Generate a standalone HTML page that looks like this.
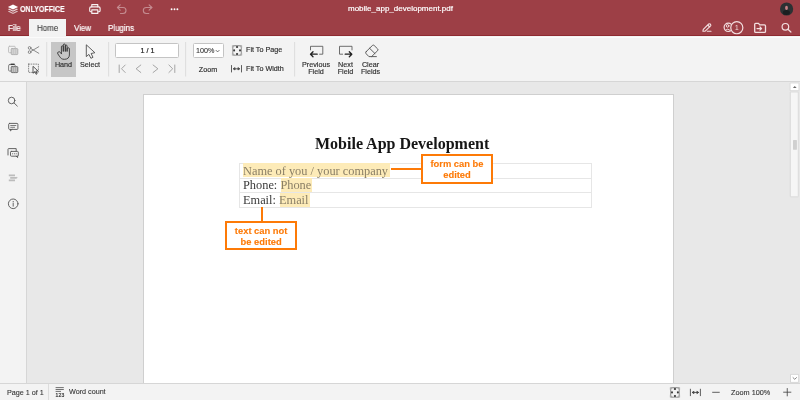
<!DOCTYPE html>
<html><head><meta charset="utf-8">
<style>
*{box-sizing:border-box;margin:0;padding:0}
html,body{width:800px;height:400px;overflow:hidden;background:#e8e8e8;font-family:"Liberation Sans",sans-serif;color:#444}
.a{position:absolute;white-space:nowrap}
#header{position:absolute;left:0;top:0;width:800px;height:36px;background:#9d3f46}
.tab{position:absolute;top:20.1px;height:17px;font-size:8.4px;color:#fff;line-height:17px;-webkit-text-stroke:0.2px #fff;transform-origin:0 0;transform:scaleX(0.95)}
#toolbar{position:absolute;left:0;top:36px;width:800px;height:46px;background:#f3f3f3;border-bottom:1px solid #d6d6d6}
#leftpanel{position:absolute;left:0;top:82px;width:27px;height:301px;background:#f3f3f3;border-right:1px solid #d6d6d6}
#page{position:absolute;left:143px;top:94px;width:531px;height:300px;background:#fff;border:1px solid #cfcfcf}
#status{position:absolute;left:0;top:383px;width:800px;height:17px;background:#f3f3f3;border-top:1px solid #d6d6d6}
.lbl{position:absolute;font-size:7.2px;color:#2e2e2e;white-space:nowrap;line-height:7.25px;text-align:center;-webkit-text-stroke:0.15px #2a2a2a}
.st{position:absolute;white-space:nowrap;font-size:7.2px;line-height:9px;color:#333;-webkit-text-stroke:0.1px #333}
.serif{font-family:"Liberation Serif",serif}
.callout{position:absolute;border:2px solid #fd7a07;background:#fff;color:#fd7a07;font-weight:bold;font-size:9.4px;line-height:10.9px;text-align:center;-webkit-text-stroke:0.1px #fd7a07}
#ov{position:absolute;left:0;top:0;width:800px;height:400px}
.a,.tab,.lbl,.st,.callout{will-change:transform}
</style></head><body>
<div id="header">
  <div class="a" style="left:0;top:35px;width:800px;height:1px;background:#8e2a31"></div>
  <div class="a" style="left:20.3px;top:4.3px;font-size:9px;font-weight:bold;color:#fff;line-height:10px;transform-origin:0 0;transform:scaleX(0.78);-webkit-text-stroke:0.15px #fff">ONLYOFFICE</div>
  <div class="a" style="left:347.6px;top:4.1px;font-size:8px;color:#fff;line-height:10px;-webkit-text-stroke:0.2px #fff">mobile_app_development.pdf</div>
  <div class="tab" style="left:8px">File</div>
  <div class="a" style="left:29px;top:19px;width:37px;height:17px;background:#f3f3f3"></div>
  <div class="tab" style="left:36.8px;color:#3a3a3a;-webkit-text-stroke:0.1px #3a3a3a">Home</div>
  <div class="tab" style="left:74px">View</div>
  <div class="tab" style="left:107.5px">Plugins</div>
</div>
<div id="toolbar">
  <div class="a" style="left:0;top:1px;width:800px;height:1px;background:#fbfbfb"></div>
  <div class="a" style="left:51px;top:6px;width:25px;height:34.5px;background:#c6c6c6"></div>
  <div class="a" style="left:115px;top:7px;width:63.6px;height:14.9px;background:#fff;border:1px solid #c4c4c4;border-radius:1.5px"></div>
  <div class="a" style="left:192.5px;top:7.2px;width:31px;height:14.7px;background:#fff;border:1px solid #c4c4c4;border-radius:1.5px"></div>
  <div class="lbl" style="left:50px;top:24.9px;width:27px">Hand</div>
  <div class="lbl" style="left:76px;top:24.9px;width:28px">Select</div>
  <div class="a" style="left:115.5px;top:11px;width:63px;font-size:7.2px;line-height:7.3px;text-align:center;color:#222;-webkit-text-stroke:0.2px #222">1 / 1</div>
  <div class="a" style="left:196px;top:11px;font-size:7.2px;line-height:7.3px;color:#333;-webkit-text-stroke:0.1px #333">100%</div>
  <div class="lbl" style="left:190px;top:30px;width:36px">Zoom</div>
  <div class="lbl" style="left:246px;top:10.2px">Fit To Page</div>
  <div class="lbl" style="left:246px;top:29.1px">Fit To Width</div>
  <div class="lbl" style="left:300px;top:24.9px;width:32px">Previous<br>Field</div>
  <div class="lbl" style="left:333px;top:24.9px;width:25px">Next<br>Field</div>
  <div class="lbl" style="left:358px;top:24.9px;width:25px">Clear<br>Fields</div>
</div>
<div id="leftpanel"></div>
<div id="page">
  <div class="a serif" style="left:170.5px;top:39.6px;font-size:16px;font-weight:bold;line-height:18px;color:#161616">Mobile App Development</div>
  <div class="a" style="left:94.5px;top:67.8px;width:353.4px;height:45px;border:1px solid #e6e6e6"></div>
  <div class="a" style="left:94.5px;top:82.5px;width:353.4px;height:1px;background:#e6e6e6"></div>
  <div class="a" style="left:94.5px;top:97.2px;width:353.4px;height:1px;background:#e6e6e6"></div>
  <div class="a" style="left:98.6px;top:68.4px;width:147px;height:13.6px;background:#fdebb8"></div>
  <div class="a" style="left:137px;top:83.2px;width:31.2px;height:13.5px;background:#fdebb8"></div>
  <div class="a" style="left:135.5px;top:97.8px;width:29.7px;height:13.9px;background:#fdebb8"></div>
  <div class="a serif" style="left:99.4px;top:68.6px;font-size:12.35px;line-height:14px;color:#8a7f66">Name of you / your company</div>
  <div class="a serif" style="left:99.4px;top:83.4px;font-size:12.35px;line-height:14px;color:#3a3a3a">Phone: <span style="color:#8a7f66">Phone</span></div>
  <div class="a serif" style="left:99.4px;top:98.2px;font-size:12.35px;line-height:14px;color:#3a3a3a">Email: <span style="color:#8a7f66">Email</span></div>
  <div class="a" style="left:246.9px;top:72.6px;width:30px;height:2px;background:#fd7a07"></div>
  <div class="callout" style="left:276.6px;top:59px;width:72px;height:29.5px;padding-top:2.6px">form can be<br>edited</div>
  <div class="a" style="left:116.8px;top:111.7px;width:2px;height:15px;background:#fd7a07"></div>
  <div class="callout" style="left:81.2px;top:126.4px;width:72.3px;height:29.3px;padding-top:2.6px">text can not<br>be edited</div>
</div>
<div id="status">
  <div class="st" style="left:6.8px;top:3.6px">Page 1 of 1</div>
  <div class="a" style="left:48px;top:0;width:1px;height:17px;background:#dcdcdc"></div>
  <div class="st" style="left:69px;top:3.3px">Word count</div>
  <div class="st" style="left:731px;top:3.5px;font-size:7.3px">Zoom 100%</div>
</div>
<svg id="ov" width="800" height="400" viewBox="0 0 800 400" fill="none" stroke-linecap="round" stroke-linejoin="round">
  <defs>
    <g id="fp">
      <rect x="0.55" y="0.55" width="8.6" height="9.6" rx="1.4" stroke="#9c9c9c" stroke-width="1.1"/>
      <path d="M0.5 2.6 L2.6 0.5 H0.5Z M9.2 2.6 L7.1 0.5 H9.2Z M0.5 8.1 L2.6 10.2 H0.5Z M9.2 8.1 L7.1 10.2 H9.2Z" fill="#a8a8a8" stroke="#a8a8a8" stroke-width="0.6"/>
      <g fill="#3a3a3a"><ellipse cx="4.85" cy="1.9" rx="1.15" ry="1"/><ellipse cx="4.85" cy="8.8" rx="1.15" ry="1"/><ellipse cx="1.9" cy="5.35" rx="1" ry="1.15"/><ellipse cx="7.8" cy="5.35" rx="1" ry="1.15"/></g>
    </g>
  </defs>
  <!-- logo -->
  <g fill="#fff" stroke="none">
    <path d="M7.9 7.1 L13 4.5 L18.1 7.1 L13 9.6 Z"/>
    <path d="M7.9 9.2 L9.1 8.6 L13 10.6 L16.9 8.6 L18.1 9.2 L13 11.7 Z" opacity="0.8"/>
    <path d="M7.9 11.4 L9.1 10.8 L13 12.8 L16.9 10.8 L18.1 11.4 L13 13.9 Z" opacity="0.65"/>
  </g>
  <!-- print -->
  <g stroke="#fff" stroke-width="1.15" opacity="0.92">
    <path d="M91.8 6.8 V4.6 H97.8 V6.8"/>
    <rect x="89.7" y="6.9" width="10.4" height="4.8" rx="1.3"/>
    <rect x="91.8" y="9.8" width="6" height="3.6" fill="#9d3f46"/>
  </g>
  <!-- undo redo -->
  <g stroke="#fff" stroke-width="1.1" opacity="0.4">
    <path d="M117.5 7.5 H123 A3 3 0 0 1 123 13.5 H120.5"/>
    <path d="M120.2 4.8 L117.4 7.5 L120.2 10.2"/>
    <path d="M151.8 7.5 H146.3 A3 3 0 0 0 146.3 13.5 H148.8"/>
    <path d="M149.1 4.8 L151.9 7.5 L149.1 10.2"/>
  </g>
  <g fill="#fff"><circle cx="171.6" cy="9.3" r="0.95"/><circle cx="174.5" cy="9.3" r="0.95"/><circle cx="177.4" cy="9.3" r="0.95"/></g>
  <!-- avatar -->
  <circle cx="786.6" cy="9" r="6.6" fill="#2c3133"/>
  <ellipse cx="786.4" cy="12.5" rx="3.5" ry="2.5" fill="#1b1f21"/>
  <ellipse cx="786.5" cy="7.9" rx="1.4" ry="2.1" fill="#c98086"/>
  <!-- header right icons -->
  <g stroke="#f3dfe0" stroke-width="1.2">
    <path d="M702.9 31.2 L703.3 29.3 L708.7 24 Q709.4 23.4 710.1 24 L710.6 24.5 Q711.2 25.2 710.6 25.9 L705.2 31.2 Z M707.7 25 L709.7 27" stroke-width="1.1"/>
    <path d="M707.3 31.3 H711" stroke-width="1.1"/>
    <circle cx="728.3" cy="27.3" r="4.2"/>
    <circle cx="727.6" cy="25.9" r="1.3" stroke-width="1"/>
    <path d="M725.3 30.2 Q727.6 27.9 730 30.2" stroke-width="1"/>
    <circle cx="736.8" cy="27.7" r="6.05" fill="#9d3f46"/>
    <path d="M754.7 31.4 V24.3 Q754.7 23.4 755.6 23.4 H758.5 L759.7 24.9 H764.5 Q765.5 24.9 765.5 25.9 V31.4 Q765.5 32.4 764.5 32.4 H755.7 Q754.7 32.4 754.7 31.4 Z" stroke-width="1.3"/>
    <path d="M757 28.6 H761.6 M760 27 L761.6 28.6 L760 30.2"/>
    <circle cx="785.4" cy="26.8" r="3.3"/>
    <path d="M787.9 29.3 L790.9 32"/>
  </g>
  <text x="736.9" y="30.2" font-size="6.6" fill="#f3dfe0" text-anchor="middle" font-family="Liberation Sans">1</text>
  <!-- toolbar: copy/paste -->
  <g stroke-width="0.9">
    <rect x="8.6" y="46.3" width="6.6" height="6.4" rx="0.8" stroke="#b8b8b8"/>
    <rect x="11.2" y="48.6" width="6.6" height="6" rx="0.8" fill="#d2d2d2" stroke="#acacac"/>
    <path d="M13.4 48.8 V54.4 M15.6 48.8 V54.4" stroke="#bcbcbc" stroke-width="0.6"/>
    <rect x="8.6" y="64.6" width="6.6" height="6.4" rx="0.8" stroke="#777"/>
    <rect x="11.2" y="66.6" width="6.6" height="6" rx="0.8" fill="#c4c4c4" stroke="#666"/>
    <path d="M13.4 66.8 V72.4 M15.6 66.8 V72.4" stroke="#999" stroke-width="0.6"/>
    <rect x="10.6" y="63.6" width="4" height="1.3" fill="#333" stroke="none"/>
  </g>
  <g stroke="#777" stroke-width="0.85">
    <circle cx="29.6" cy="47.9" r="1.35"/>
    <circle cx="29.6" cy="52.1" r="1.35"/>
    <path d="M30.9 48.6 L38.8 53.3 M30.9 51.4 L38.8 46.7"/>
  </g>
  <path d="M28.6 64.1 H38.4 V72.4 H28.6 Z" stroke="#777" stroke-width="0.85" stroke-dasharray="0.9 1.5"/>
  <path d="M33.3 66.6 L37.9 70.9 L35.9 71.1 L37.1 73.8 L36.1 74.3 L34.9 71.6 L33.3 73 Z" fill="#f3f3f3" stroke="#333" stroke-width="0.8"/>
  <!-- separators -->
  <g fill="#dadada"><rect x="46.3" y="42" width="0.9" height="34.5"/><rect x="108.2" y="42" width="0.9" height="34.5"/><rect x="185.2" y="42" width="0.9" height="34.5"/><rect x="294.2" y="42" width="0.9" height="34.5"/></g>
  <!-- hand -->
  <path d="M61.4 53.6 V46.8 A0.95 0.95 0 0 1 63.3 46.8 V51.5 V45 A1 1 0 0 1 65.3 45 V51.5 V46 A0.9 0.9 0 0 1 67.1 46 V51.5 V48.9 A1.15 1.15 0 0 1 69.4 48.9 V55 C69.4 57.6 67.4 59.3 64.6 59.3 H64 C62 59.3 60.8 58.3 59.8 56.8 L57.9 54 A1.4 1.4 0 0 1 60.2 52.3 L61.4 53.8" stroke="#2e2e2e" stroke-width="0.85"/>
  <!-- select -->
  <path d="M86.3 45.2 V56.6 L88.9 54.4 L90.9 58.3 L93 57.3 L91.1 53.5 L94.5 52.8 Z" stroke="#444" stroke-width="0.85"/>
  <!-- nav arrows -->
  <g stroke="#9c9c9c" stroke-width="0.9">
    <path d="M119.2 65 V72.5 M125.2 65 L121.5 68.75 L125.2 72.5"/>
    <path d="M140.8 65 L136.1 68.75 L140.8 72.5"/>
    <path d="M153.1 65 L157.9 68.75 L153.1 72.5"/>
    <path d="M168.9 65 L172.7 68.75 L168.9 72.5 M174.8 65 V72.5"/>
  </g>
  <path d="M216.1 50.4 L217.6 51.9 L219.1 50.4" stroke="#444" stroke-width="0.8"/>
  <use href="#fp" x="232.2" y="45.1"/>
  <g stroke="#444" stroke-width="0.85">
    <path d="M231.5 65.5 V72 M241.5 65.5 V72 M233.6 68.8 H239.4"/>
    <path d="M234.7 67.8 L233.3 68.8 L234.7 69.8 Z M238.3 67.8 L239.7 68.8 L238.3 69.8 Z" fill="#444"/>
  </g>
  <!-- prev / next / clear -->
  <path d="M310.5 49.9 V46.3 H322.8 V54.2 H319.6" stroke="#555" stroke-width="0.85"/>
  <path d="M317.2 54.2 H310.6 M313 51.7 L310.5 54.2 L313 56.7" stroke="#222" stroke-width="1.3"/>
  <path d="M352 49.9 V46.3 H339.5 V54.2 H342.6" stroke="#555" stroke-width="0.85"/>
  <path d="M345.2 54.2 H351.8 M349.3 51.7 L351.8 54.2 L349.3 56.7" stroke="#222" stroke-width="1.3"/>
  <path d="M366.1 51.7 L372.4 45.5 Q373.3 44.6 374.2 45.5 L377.6 48.9 Q378.5 49.8 377.6 50.7 L371.6 56.6 H368.9 L366.1 53.7 Q365.2 52.7 366.1 51.7 Z M369.6 48.3 L374.9 53.5 M371.6 56.6 H376.4" stroke="#444" stroke-width="0.85"/>
  <!-- left panel -->
  <g stroke="#555" stroke-width="0.9">
    <circle cx="11.6" cy="100.5" r="3.3"/>
    <path d="M14 102.9 L17.3 106.1"/>
    <rect x="8.7" y="123.4" width="9.2" height="6" rx="0.9"/>
    <path d="M10.4 129.4 V130.9 L12 129.4"/>
    <path d="M10.7 125.5 H15.9 M10.7 127.3 H14.6" stroke-width="0.75"/>
    <path d="M8 155 V149.3 Q8 148.6 8.7 148.6 H16.2 V150.9"/>
    <rect x="10.5" y="151.4" width="7.8" height="4.8" rx="0.8"/>
    <path d="M16.2 156.2 L17.6 157.6 V156.2"/>
    <circle cx="13.2" cy="203.8" r="4.8"/>
    <path d="M13.2 203 V206.2"/>
  </g>
  <g fill="#555"><circle cx="12.6" cy="153.8" r="0.55"/><circle cx="14.4" cy="153.8" r="0.55"/><circle cx="16.2" cy="153.8" r="0.55"/><circle cx="13.2" cy="201.5" r="0.6"/></g>
  <path d="M8.8 175.3 H15 M10.2 177.8 H16.2 M8.8 180.3 H15" stroke="#bcbcbc" stroke-width="1.85" stroke-linecap="butt"/>
  <path d="M16 176.8 L17.9 177.8 L16 178.8 Z" fill="#bcbcbc"/>
  <!-- status bar -->
  <g stroke="#444" stroke-width="0.75" stroke-linecap="butt">
    <path d="M55.6 387.6 H63.8 M55.6 389.5 H63.8 M55.6 391.4 H61"/>
  </g>
  <text x="55.4" y="397" font-size="5" fill="#333" stroke="#333" stroke-width="0.2" font-family="Liberation Sans" letter-spacing="0.3">123</text>
  <use href="#fp" x="670.1" y="387.1"/>
  <g stroke="#444" stroke-width="0.85">
    <path d="M690.4 389.2 V395.7 M700.4 389.2 V395.7 M692.5 392.45 H698.3"/>
    <path d="M693.6 391.45 L692.2 392.45 L693.6 393.45 Z M697.2 391.45 L698.6 392.45 L697.2 393.45 Z" fill="#444"/>
    <path d="M712.6 392.3 H719.3"/>
    <path d="M783.6 392.2 H790.9 M787.25 388.5 V395.9"/>
  </g>
  <!-- scrollbar -->
  <rect x="790.4" y="83" width="8.5" height="7.6" fill="#fff" stroke="#d8d8d8" stroke-width="0.8"/>
  <path d="M792.9 88 L794.75 86.1 L796.6 88 Z" fill="#6a6a6a"/>
  <rect x="790.7" y="92" width="7.6" height="104.8" fill="#f6f6f6" stroke="#d8d8d8" stroke-width="0.8"/>
  <rect x="793" y="140" width="3.9" height="9.8" rx="0.5" fill="#d0d0d0"/>
  <rect x="790.9" y="374.4" width="7.7" height="8" fill="#fff" stroke="#d0d0d0" stroke-width="0.8"/>
  <path d="M793 377.6 L794.75 379.3 L796.5 377.6" stroke="#666" stroke-width="0.8"/>
</svg>
</body></html>
